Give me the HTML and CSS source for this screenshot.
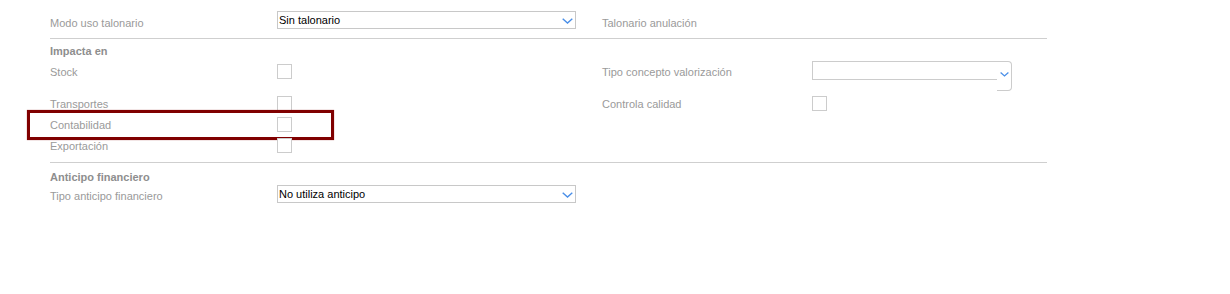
FILE: index.html
```html
<!DOCTYPE html>
<html lang="es">
<head>
    <meta charset="UTF-8">
    <title>Tipo de comprobante</title>
    <link rel="stylesheet" href="styles.css">
</head>
<body>
<div class="form">
    <div class="row row-first">
        <label class="label">Modo uso talonario</label>
        <div class="select">
            <span class="select-value">Sin talonario</span>
            <svg class="chevron" width="11" height="6" viewBox="0 0 11 6"><path d="M0.7 0.7 L5.5 5 L10.3 0.7" fill="none" stroke="#4a8fe8" stroke-width="1.4"/></svg>
        </div>
        <label class="label">Talonario anulación</label>
        <div></div>
    </div>

    <div class="section">
        <div class="section-title">Impacta en</div>
        <div class="row row-tall">
            <label class="label">Stock</label>
            <div><span class="check"></span></div>
            <label class="label">Tipo concepto valorización</label>
            <div class="combo">
                <div class="combo-field"></div>
                <div class="combo-button">
                    <svg width="9" height="5" viewBox="0 0 9 5"><path d="M0.6 0.6 L4.5 4 L8.4 0.6" fill="none" stroke="#4a8fe8" stroke-width="1.3"/></svg>
                </div>
            </div>
        </div>
        <div class="row">
            <label class="label">Transportes</label>
            <div><span class="check"></span></div>
            <label class="label">Controla calidad</label>
            <div><span class="check"></span></div>
        </div>
        <div class="row row-focus">
            <label class="label">Contabilidad</label>
            <div><span class="check"></span></div>
            <div></div>
            <div></div>
            <span class="focus-box"></span>
        </div>
        <div class="row">
            <label class="label">Exportación</label>
            <div><span class="check"></span></div>
            <div></div>
            <div></div>
        </div>
    </div>

    <div class="section section-last">
        <div class="section-title">Anticipo financiero</div>
        <div class="row row-select">
            <label class="label">Tipo anticipo financiero</label>
            <div class="select">
                <span class="select-value">No utiliza anticipo</span>
                <svg class="chevron" width="11" height="6" viewBox="0 0 11 6"><path d="M0.7 0.7 L5.5 5 L10.3 0.7" fill="none" stroke="#4a8fe8" stroke-width="1.4"/></svg>
            </div>
            <div></div>
            <div></div>
        </div>
    </div>
</div>
</body>
</html>
```

FILE: styles.css
```css
body {
    margin: 0;
    background: #ffffff;
    font-family: "Liberation Sans", Arial, sans-serif;
    font-size: 11px;
}

.form {
    width: 997px;
    margin-left: 50px;
}

/* Rows */
.row {
    position: relative;
    display: grid;
    grid-template-columns: 227px 325px 210px 235px;
    height: 21px;
    align-items: start;
}

.row .label {
    display: block;
    margin-top: 4px;
    line-height: 14px;
    color: #9a9a9a;
}

.row-first {
    height: 27px;
    padding-top: 11px;
    border-bottom: 1px solid #cfcfcf;
}

.row-first .label {
    margin-top: 5px;
}

.row-tall {
    height: 32px;
}

.row-select {
    height: 20px;
}

/* Sections */
.section {
    padding-bottom: 6px;
    border-bottom: 1px solid #cfcfcf;
}

.section-last {
    border-bottom: none;
}

.section-title {
    margin-top: 5px;
    margin-bottom: 3px;
    line-height: 14px;
    font-weight: bold;
    color: #8e8e8e;
}

.section-last .section-title {
    margin-top: 7px;
    margin-bottom: 1px;
}

/* Controls */
.select {
    display: flex;
    align-items: center;
    justify-content: space-between;
    box-sizing: border-box;
    width: 299px;
    height: 18px;
    padding: 0 2px 0 1px;
    border: 1px solid #c8c8c8;
    background: #ffffff;
    color: #000000;
}

.select-value {
    line-height: 14px;
}

.chevron {
    margin-top: 1px;
}

.check {
    display: block;
    box-sizing: border-box;
    width: 15px;
    height: 15px;
    margin-top: 3px;
    border: 1px solid #cccccc;
    background: #ffffff;
}

.combo {
    display: flex;
    width: 200px;
}

.combo-field {
    box-sizing: border-box;
    width: 185px;
    height: 19px;
    border: 1px solid #cccccc;
    border-right: none;
}

.combo-button {
    display: flex;
    align-items: flex-end;
    justify-content: center;
    box-sizing: border-box;
    width: 15px;
    height: 30px;
    padding-bottom: 13px;
    border: 1px solid #cccccc;
    border-left: none;
    border-radius: 0 4px 4px 0;
}

/* Focus highlight over the Contabilidad row */
.focus-box {
    position: absolute;
    top: -4px;
    left: -23px;
    box-sizing: border-box;
    width: 307px;
    height: 30px;
    border: 3px solid #800000;
    box-shadow: 0 0 1px rgba(128, 0, 0, 0.6);
    pointer-events: none;
}
```
